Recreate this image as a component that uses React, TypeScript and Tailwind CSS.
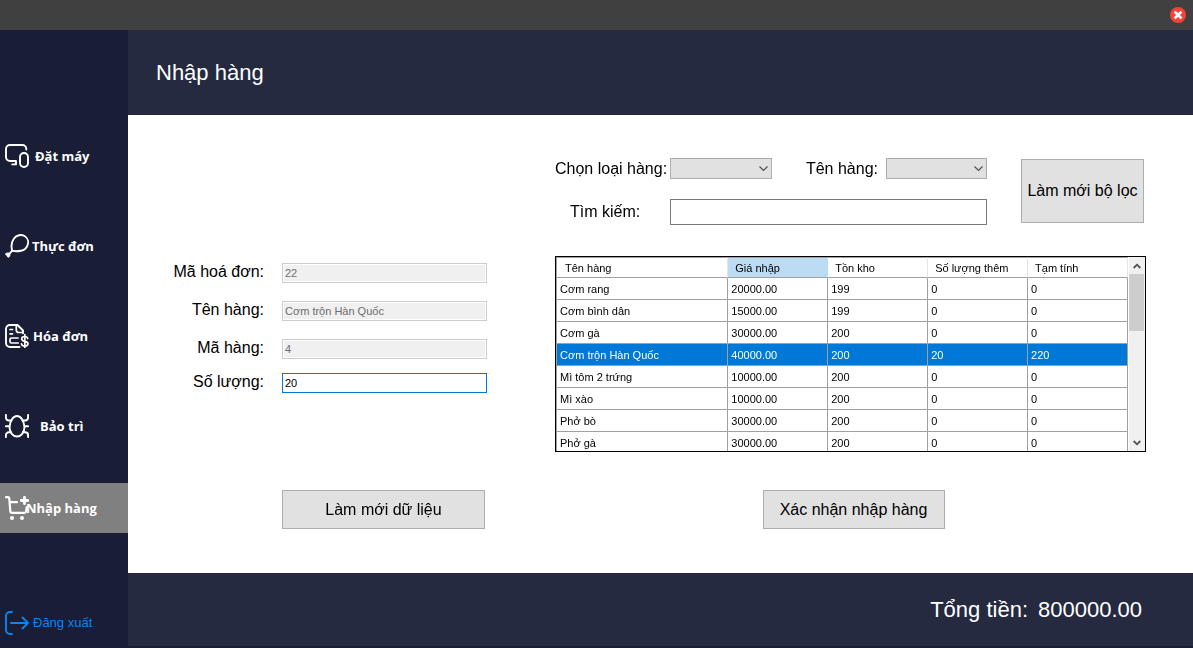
import React, { useState } from 'react';

interface Product {
  name: string;
  price: string;
  stock: number;
  added: number;
  total: number;
}

interface NavItem {
  label: string;
  icon: React.ReactNode;
  className: string;
}

const products: Product[] = [
  { name: 'Cơm rang', price: '20000.00', stock: 199, added: 0, total: 0 },
  { name: 'Cơm bình dân', price: '15000.00', stock: 199, added: 0, total: 0 },
  { name: 'Cơm gà', price: '30000.00', stock: 200, added: 0, total: 0 },
  { name: 'Cơm trộn Hàn Quốc', price: '40000.00', stock: 200, added: 20, total: 220 },
  { name: 'Mì tôm 2 trứng', price: '10000.00', stock: 200, added: 0, total: 0 },
  { name: 'Mì xào', price: '10000.00', stock: 200, added: 0, total: 0 },
  { name: 'Phở bò', price: '30000.00', stock: 200, added: 0, total: 0 },
  { name: 'Phở gà', price: '30000.00', stock: 200, added: 0, total: 0 },
];

const columns = ['Tên hàng', 'Giá nhập', 'Tồn kho', 'Số lượng thêm', 'Tạm tính'];

const Icon: React.FC<{ children: React.ReactNode }> = ({ children }) => (
  <svg
    viewBox="0 0 24 24"
    className="h-6 w-6 shrink-0"
    fill="none"
    stroke="currentColor"
    strokeWidth="1.9"
    strokeLinecap="round"
    strokeLinejoin="round"
    aria-hidden="true"
  >
    {children}
  </svg>
);

const navItems: NavItem[] = [
  {
    label: 'Đặt máy',
    className: 'gap-1.5',
    icon: (
      <Icon>
        <path d="M21.3 5.5V5A4 4 0 0 0 17.3 1H5A4 4 0 0 0 1 5v8a4 4 0 0 0 4 4h6v3.4H7.2" />
        <rect x="15" y="9" width="8" height="14" rx="4" />
      </Icon>
    ),
  },
  {
    label: 'Thực đơn',
    className: 'mt-10 gap-[3px]',
    icon: (
      <Icon>
        <path d="M7.200 16.800C6 12.500 6.700 7.500 9 4.500 11.600 1 16.200.1 19.500 2c3.400 2 4.300 6 3 9.300-1.200 3.200-3.700 4.800-6.500 5.400-3 .6-6 .7-8.800.1Z" />
        <path d="m7 16.800-3.200 3.500" />
        <path d="M4.600 19.300c-1.300-.5-3.200-.3-3.800.3-.5.700.1 1.500 1.200 1.700.1 1.200.8 2.300 1.700 1.900.9-.5 1.500-1.900 1.100-3.500Z" fill="currentColor" strokeWidth="1" />
      </Icon>
    ),
  },
  {
    label: 'Hóa đơn',
    className: 'mt-10 gap-1',
    icon: (
      <Icon>
        <path d="M14.500 23H5a4 4 0 0 1-4-4V5a4 4 0 0 1 4-4h7.500L18 6.500v2.700" />
        <path
          d="M11.300 1.500V6a2.500 2.500 0 0 0 2.500 2.500H18M5 5.500h2.500M5 9.800h2.500M13 14H6.500A1.500 1.500 0 0 0 5 15.500v2A1.500 1.500 0 0 0 6.500 19h6.700"
          strokeWidth="1.700"
        />
        <path
          d="M22.700 14.400c-.5-1.300-1.500-1.900-3-1.900-1.700 0-3 .8-3 2.400 0 3.400 6.300 1.500 6.300 4.700 0 1.700-1.500 2.500-3.200 2.500-1.800 0-3-.8-3.300-2.300M19.800 10.700v12.700"
          strokeWidth="1.700"
        />
      </Icon>
    ),
  },
  {
    label: 'Bảo trì',
    className: 'mt-10 gap-[11px]',
    icon: (
      <Icon>
        <path d="M12 2c4 0 7 5 7.500 11 0 5.500-3.500 9.500-7.500 9.500S4.500 18.500 4.500 13C5 7 8 2 12 2Z" />
        <path d="M.9.900v2.600A3 3 0 0 0 3.900 6.500h2.600M23.100.900v2.600a3 3 0 0 1-3 3h-2.600M.9 12.200H4.500M23.100 12.200H19.500M.9 23.100v-1.800a3 3 0 0 1 3-3h2.300M23.100 23.100v-1.800a3 3 0 0 0-3-3h-2.300" />
      </Icon>
    ),
  },
  {
    label: 'Nhập hàng',
    className: 'mt-8 bg-[#808080]',
    icon: (
      <Icon>
        <path d="M1 1.200h1.800c.9 0 1.400.5 1.500 1.400l1 12.600c.1 1.100.7 1.700 1.800 1.700h12.200c1 0 1.600-.5 1.800-1.500L21.700 11M4.500 6.200h7.500" strokeWidth="2.200" />
        <path d="M19.500 1.300v6.400M16.300 4.500h6.400" strokeWidth="2.800" />
        <circle cx="7" cy="22" r="2" fill="currentColor" stroke="none" />
        <circle cx="17" cy="22" r="2" fill="currentColor" stroke="none" />
      </Icon>
    ),
  },
];

const Sidebar: React.FC = () => (
  <nav className="flex w-32 shrink-0 flex-col bg-[#191e36] pt-[101px]">
    {navItems.map((item) => (
      <button
        key={item.label}
        type="button"
        className={`flex h-[50px] w-full items-center pl-[5px] font-['Open_Sans',sans-serif] text-[13px] font-bold whitespace-nowrap text-white ${item.className}`}
      >
        {item.icon}
        <span className={item.label === 'Nhập hàng' ? '-ml-[3px] pt-0.5' : 'pt-0.5'}>{item.label}</span>
      </button>
    ))}
    <button
      type="button"
      className="mt-[65px] flex h-[50px] w-full items-center gap-1 pl-[5px] text-[13px] text-[#0a84f5]"
    >
      <Icon>
        <path d="M7 1H5a4 4 0 0 0-4 4v14a4 4 0 0 0 4 4h2M6 12h17M17.500 6.500 23 12l-5.500 5.500" />
      </Icon>
      Đăng xuất
    </button>
  </nav>
);

interface FieldProps {
  id: string;
  label: string;
  value: string;
  disabled?: boolean;
  onChange?: (value: string) => void;
}

const Field: React.FC<FieldProps> = ({ id, label, value, disabled, onChange }) => (
  <div className="flex h-5 items-center gap-[18px]">
    <label htmlFor={id} className="w-34 shrink-0 pb-0.5 text-right text-base leading-5">
      {label}
    </label>
    <input
      id={id}
      type="text"
      value={value}
      disabled={disabled}
      autoFocus={!disabled}
      onChange={(e) => onChange?.(e.target.value)}
      className="h-5 min-w-0 flex-1 border border-[#0078d7] bg-white px-0.5 text-[11px] outline-none disabled:border-[#cccccc] disabled:bg-[#f0f0f0] disabled:text-[#6d6d6d] disabled:shadow-[inset_0_0_0_1px_white]"
    />
  </div>
);

const Dropdown: React.FC<{ id: string }> = ({ id }) => (
  <div className="relative h-[21px]">
    <select
      id={id}
      className="block h-[21px] w-full appearance-none border border-[#adadad] bg-[#e1e1e1] px-1 text-xs outline-none"
    >
      <option value="" />
    </select>
    <svg
      viewBox="0 0 9 6"
      className="pointer-events-none absolute top-2 right-1 h-1.5 w-[9px]"
      fill="none"
      stroke="#505050"
      strokeWidth="1.2"
      aria-hidden="true"
    >
      <path d="m.5.500 4 4 4-4" />
    </svg>
  </div>
);

const Filters: React.FC = () => (
  <div className="flex items-start">
    <div className="grid flex-1 grid-cols-[115px_102fr_114px_101fr] items-center gap-y-5">
      <label htmlFor="category" className="text-base leading-5 whitespace-nowrap">
        Chọn loại hàng:
      </label>
      <Dropdown id="category" />
      <label htmlFor="product" className="pr-2 text-right text-base leading-5">
        Tên hàng:
      </label>
      <Dropdown id="product" />
      <label htmlFor="search" className="pl-[15px] text-base leading-5">
        Tìm kiếm:
      </label>
      <input
        id="search"
        type="text"
        className="col-span-3 h-[26px] min-w-0 border border-[#7a7a7a] bg-white px-1 text-base outline-none"
      />
    </div>
    <button
      type="button"
      className="mt-px mr-0.5 ml-[34px] h-16 w-[123px] border border-[#adadad] bg-[#e1e1e1] text-base whitespace-nowrap"
    >
      Làm mới bộ lọc
    </button>
  </div>
);

const Scrollbar: React.FC = () => (
  <div className="flex w-[17px] shrink-0 flex-col border-l border-white bg-[#f0f0f0]">
    <button type="button" aria-label="Cuộn lên" className="flex h-[17px] items-center justify-center">
      <svg viewBox="0 0 8 6" className="h-1.5 w-2" fill="none" stroke="#505050" strokeWidth="1.8">
        <path d="m.7 5 3.300-3.300L7.300 5" />
      </svg>
    </button>
    <div className="mr-px h-[57px] bg-[#cdcdcd]" />
    <button type="button" aria-label="Cuộn xuống" className="mt-auto flex h-[17px] items-center justify-center">
      <svg viewBox="0 0 8 6" className="h-1.5 w-2" fill="none" stroke="#505050" strokeWidth="1.8">
        <path d="m.7 1 3.300 3.300L7.300 1" />
      </svg>
    </button>
  </div>
);

const ProductTable: React.FC = () => {
  const [selected, setSelected] = useState(3);

  return (
    <div className="mt-[31px] flex h-[196px] overflow-hidden border border-black">
      <div className="min-w-0 flex-1 overflow-hidden border-l border-[#a0a0a0]">
        <table className="w-full table-fixed border-separate border-spacing-0 text-left text-[11px] leading-4">
          <thead>
            <tr className="h-[21px]">
              {columns.map((column, idx) => (
                <th
                  key={column}
                  scope="col"
                  className={`border-t border-r border-b border-t-[#a0a0a0] border-b-[#a0a0a0] py-0 font-normal whitespace-nowrap ${
                    idx === 0 ? 'w-[30%] pl-2' : 'pl-[7px]'
                  } ${idx === 1 ? 'border-r-[#bcdcf4] bg-[#bcdcf4]' : 'border-r-[#e5e5e5]'}`}
                >
                  {column}
                </th>
              ))}
            </tr>
          </thead>
          <tbody>
            {products.map((product, idx) => (
              <tr
                key={product.name}
                onClick={() => setSelected(idx)}
                className={`h-[22px] ${idx === selected ? 'bg-[#0078d7] text-white' : ''}`}
              >
                {[product.name, product.price, product.stock, product.added, product.total].map((cell, i) => (
                  <td key={i} className="border-r border-b border-[#a0a0a0] py-0 pl-[3px] whitespace-nowrap">
                    {cell}
                  </td>
                ))}
              </tr>
            ))}
          </tbody>
        </table>
      </div>
      <Scrollbar />
    </div>
  );
};

const App: React.FC = () => {
  const [quantity, setQuantity] = useState('20');

  return (
    <div className="flex min-h-screen flex-col bg-white font-['Liberation_Sans',Arial,sans-serif] text-black">
      {/* Title bar */}
      <div className="flex h-[30px] shrink-0 items-center justify-end bg-[#404040] pr-[7px]">
        <button type="button" aria-label="Đóng">
          <svg viewBox="0 0 16 16" className="h-4 w-4" aria-hidden="true">
            <circle cx="8" cy="8" r="8" fill="#f44336" />
            <path d="m5.500 5.500 5 5M10.500 5.500l-5 5" stroke="white" strokeWidth="2.600" strokeLinecap="square" />
          </svg>
        </button>
      </div>

      <div className="flex flex-1">
        <Sidebar />

        <div className="flex min-w-0 flex-1 flex-col">
          <header className="flex h-[85px] items-center bg-[#262a40] pl-7">
            <h1 className="text-[22px] leading-7 text-white">Nhập hàng</h1>
          </header>

          <main className="grid flex-1 grid-cols-[359fr_591fr] gap-x-[68px] pr-[47px]">
            <form className="flex flex-col gap-3.5 pt-[148px]" onSubmit={(e) => e.preventDefault()}>
              <div className="flex flex-col gap-[18px]">
                <Field id="invoice-id" label="Mã hoá đơn:" value="22" disabled />
                <Field id="item-name" label="Tên hàng:" value="Cơm trộn Hàn Quốc" disabled />
                <Field id="item-id" label="Mã hàng:" value="4" disabled />
              </div>
              <Field id="quantity" label="Số lượng:" value={quantity} onChange={setQuantity} />
              <button
                type="submit"
                className="mt-[83px] mr-0.5 ml-[154px] h-[39px] border border-[#adadad] bg-[#e1e1e1] text-base"
              >
                Làm mới dữ liệu
              </button>
            </form>

            <section className="pt-[43px]">
              <Filters />
              <ProductTable />
              <div className="mt-[38px] flex justify-center pl-1.5">
                <button
                  type="button"
                  className="h-[39px] w-[182px] border border-[#adadad] bg-[#e1e1e1] text-base whitespace-nowrap"
                >
                  Xác nhận nhập hàng
                </button>
              </div>
            </section>
          </main>

          <footer className="flex h-[75px] items-center justify-end gap-2.5 border-b-2 border-[#191e36] bg-[#262a40] pr-[51px] text-[22px] leading-7 text-white">
            <span>Tổng tiền:</span>
            <output>800000.00</output>
          </footer>
        </div>
      </div>
    </div>
  );
};

export default App;
